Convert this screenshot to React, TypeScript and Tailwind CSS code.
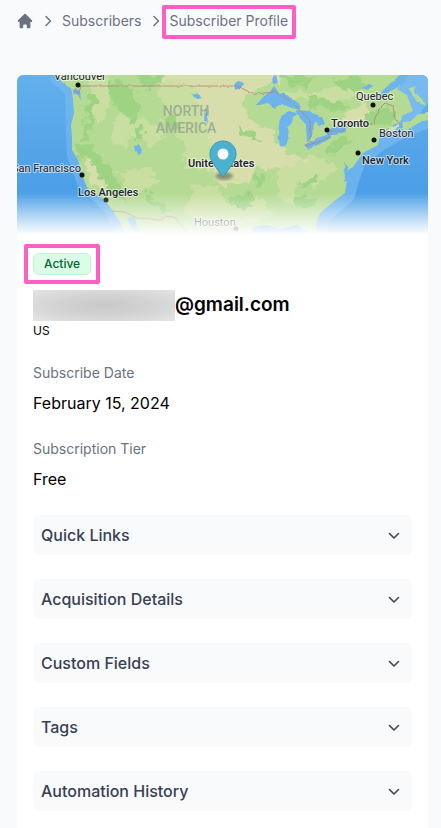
import React from "react";

const sections = [
	"Quick Links",
	"Acquisition Details",
	"Custom Fields",
	"Tags",
	"Automation History",
];

const cities = [
	{ name: "Vancouver", x: 37, y: 5, dot: [61, 10], weight: 400 },
	{ name: "San Francisco", x: -5, y: 97, dot: [65, 100], weight: 400 },
	{ name: "Los Angeles", x: 61, y: 121, dot: [89, 125], weight: 500 },
	{ name: "Quebec", x: 339, y: 25, dot: [356, 30], weight: 400 },
	{ name: "Toronto", x: 314, y: 52, dot: [310, 55], weight: 500 },
	{ name: "Boston", x: 362, y: 62, dot: [357, 65], weight: 400 },
	{ name: "New York", x: 345, y: 89, dot: [341, 78], weight: 500 },
	{ name: "Houston", x: 177, y: 151, dot: [219, 154], weight: 400 },
];

const ChevronRight: React.FC = () => (
	<svg
		className="h-5 w-5 shrink-0"
		viewBox="0 0 20 20"
		fill="none"
		stroke="currentColor"
		strokeWidth="1.5"
		strokeLinecap="round"
		strokeLinejoin="round"
		aria-hidden="true"
	>
		<path d="M8 5.500l4.500 4.500L8 14.500" />
	</svg>
);

const ChevronDown: React.FC = () => (
	<svg
		className="h-5 w-5 shrink-0"
		viewBox="0 0 20 20"
		fill="none"
		stroke="currentColor"
		strokeWidth="1.5"
		strokeLinecap="round"
		strokeLinejoin="round"
		aria-hidden="true"
	>
		<path d="M5.500 8.500L10 13l4.500-4.500" />
	</svg>
);

const LocationMap: React.FC = () => (
	<svg
		className="block h-40 w-full rounded-t-md font-[Roboto,sans-serif]"
		viewBox="0 0 411 160"
		preserveAspectRatio="xMidYMid slice"
		role="img"
		aria-label="Subscriber location"
	>
		<defs>
			<linearGradient id="fade" x1="0" y1="0" x2="0" y2="1">
				<stop offset="0.74" stopColor="#fff" stopOpacity="0" />
				<stop offset="1" stopColor="#fff" />
			</linearGradient>
			<linearGradient id="ocean" x1="0" y1="0" x2="0" y2="1">
				<stop offset="0" stopColor="#64b0ec" />
				<stop offset="0.7" stopColor="#4c9fe6" />
				<stop offset="1" stopColor="#5aa9ea" />
			</linearGradient>
			<filter id="rough" x="-5%" y="-5%" width="110%" height="110%">
				<feTurbulence type="fractalNoise" baseFrequency="0.1" numOctaves="3" seed="4" />
				<feDisplacementMap in="SourceGraphic" scale="16" xChannelSelector="R" yChannelSelector="G" />
			</filter>
			<filter id="shore" x="-5%" y="-5%" width="110%" height="110%">
				<feTurbulence type="fractalNoise" baseFrequency="0.2" numOctaves="2" seed="7" />
				<feDisplacementMap in="SourceGraphic" scale="3" xChannelSelector="R" yChannelSelector="G" />
			</filter>
			<filter id="soft">
				<feGaussianBlur stdDeviation="1.5" />
			</filter>
			<clipPath id="land">
				<path d="M48 -4L55 17 56 25 57 38 54 50 55 62 55 75 61 85 64 95 68 108 73 118 82 121 88 125 95 135 103 147 110 162H236V152L250 150 262 154 280 150 293 158 301 162 299 148 303 138 316 127 328 118 330 105 331 95 336 92 346 78 361 70 363 60 373 52 383 47 386 40 396 36 390 20 380 14 390 2 394 -4Z" />
			</clipPath>
		</defs>
		<rect width="411" height="160" fill="url(#ocean)" />
		{/* shallow water along the coasts */}
		<g fill="none" stroke="#78baf0" strokeLinejoin="round">
			<path strokeWidth="12" d="M36 0L54 17 55 62 56 80 66 108 90 130 108 160" opacity="0.6" />
			<path strokeWidth="16" d="M411 45L386 55 363 68 341 85 334 105 330 120 304 142 302 160" opacity="0.7" />
			<path strokeWidth="36" d="M411 0L390 25 380 46" />
		</g>
		<g clipPath="url(#land)">
			<rect width="411" height="162" fill="#b5da94" />
			<g filter="url(#rough)">
				<path fill="#d7deac" d="M135 -5H270L262 6 250 12 240 12 225 24 200 20 180 10 150 10Z" />
				<path fill="#c8dfa1" d="M75 0L95 0 92 34 82 50 74 30Z" />
				<path fill="#c8dfa1" d="M140 8L185 12 200 60 190 92 170 96 168 70 150 52Z" />
				<path fill="#d7deac" d="M178 6L225 22 232 42 258 62 268 80 300 84 286 96 240 92 232 106 205 112 190 96 198 72 186 50Z" />
				<path fill="#c8dfa1" d="M105 40L130 44 150 62 132 70 118 60 108 78 96 64 92 50Z" />
				<path fill="#c8dfa1" d="M175 110L200 112 212 130 240 124 258 142 210 152 168 142Z" />
				<path fill="#c8dfa1" d="M262 94L296 84 322 92 300 110 280 106 276 130 260 120Z" />
				<path fill="#c8dfa1" d="M100 98L124 94 146 104 130 116 108 112Z" />
				<path fill="#c8dfa1" d="M255 14L300 18 330 8 345 20 316 28 272 26Z" />
				<path fill="#d7deac" d="M326 40L348 30 356 36 340 48 316 52Z" />
				<g fill="#9ed383">
					<path d="M92 10L102 6 116 16 122 34 116 48 104 36 96 26Z" />
					<path d="M72 18L80 22 76 44 70 66 64 62 70 44Z" />
					<path d="M56 68L74 70 90 90 100 104 110 128 100 126 88 106 74 92 62 84Z" />
					<path d="M118 52L128 54 126 66 118 64Z" />
					<path d="M150 44L160 40 162 56 152 54Z" />
					<path d="M126 118L140 122 152 136 146 140 132 128Z" />
					<path d="M116 -2L150 0 144 8 128 12Z" />
					<path d="M264 2L276 0 300 2 292 12 270 8Z" />
					<path d="M318 4L340 0 350 12 334 18 320 12Z" />
					<path d="M290 20L318 24 332 34 314 36 296 32Z" />
					<path d="M344 40L370 30 380 36 376 48 352 52Z" />
					<path d="M310 72L328 62 334 66 322 76 308 80Z" />
					<path d="M280 110L298 98 304 102 288 114Z" />
					<path d="M276 124L292 120 300 128 288 136 278 132Z" />
					<path d="M238 100L246 98 248 110 240 112Z" />
					<path d="M214 122L232 118 238 128 228 134 214 130Z" />
					<path d="M222 52L236 56 240 64 226 62Z" />
				</g>
				<path fill="#d7deac" d="M64 80L72 84 88 106 94 122 82 116 74 104Z" />
			</g>
		</g>
		<g filter="url(#shore)">
			<path fill="#b5da94" d="M36 -2L48 -4 62 10 61 16 50 11Z" />
			<path fill="#b5da94" d="M384 54L387 47 394 46 400 40 411 37V45L401 48 390 56Z" />
			<path fill="#b5da94" d="M392 14L398 11 397 17 405 24 409 31 400 27Z" />
			<path fill="#d7deac" d="M372 52L383 49 378 55 366 62Z" />
			<g fill="#6eb4ec">
				<path d="M58 13L63 16 64 26 61 20 56 18Z" />
				<path d="M238 31L247 21 252 18 257 11 262 18 270 20 280 27 284 35 274 33 265 29 258 34 251 28Z" />
				<path d="M263 42L272 36 282 38 276 42 275 48 271 52 272 62 268 72 263 71 261 57Z" />
				<path d="M279 35L292 36 305 42 308 49 301 51 299 46 296 52 295 62 290 67 289 50 283 43Z" />
				<path d="M287 70L300 63 313 59 314 63 303 69 291 74Z" />
				<path d="M309 56L317 52 329 52 329 57 318 60 310 60Z" />
				<path d="M255 2L259 0 261 8 256 9Z" />
				<path d="M217 10L222 6 227 8 224 13 218 15Z" />
				<path d="M117 71L122 70 125 75 123 79 118 76Z" />
				<path d="M174 18L180 19 185 23 180 24Z" />
				<path d="M188 33L192 35 190 48 187 45Z" />
				<path d="M327 88L331 92 332 103 328 108Z" />
				<path d="M110 142L118 143 121 155 127 160H117Z" />
				<path d="M345 13L352 9 356 11 350 15Z" />
				<path d="M360 26L365 16 374 8 385 -2 394 -2 386 9 374 16Z" />
			</g>
			<path d="M55 16L62 18 64 11H221L226 14 238 19 258 17 274 27 285 37 293 46 294 61 290 71 313 62 313 56 326 56 329 49 356 49 362 34 368 28 376 31 378 44 384 51" fill="none" stroke="#b78278" strokeWidth="0.8" />
			<path d="M95 136L107 137 120 143 145 145 147 141 157 142 166 152 174 160" fill="none" stroke="#b78278" strokeWidth="0.8" />
		</g>
		<g fill="#9fae93" fontSize="14" fontWeight="500" textAnchor="middle">
			<text x="169" y="41">NORTH</text>
			<text x="169" y="58">AMERICA</text>
		</g>
		<g
			stroke="#fff"
			strokeOpacity="0.6"
			strokeWidth="2"
			strokeLinejoin="round"
			paintOrder="stroke"
			fill="#20242b"
			fontSize="11"
		>
			{cities.map((city) => (
				<text key={city.name} x={city.x} y={city.y} fontWeight={city.weight}>
					{city.name}
				</text>
			))}
			<text x="171" y="92" fontWeight="600">
				United States
			</text>
		</g>
		{cities.map((city) => (
			<circle key={city.name} cx={city.dot[0]} cy={city.dot[1]} r="2.500" fill="#111" />
		))}
		<ellipse cx="207" cy="101" rx="9" ry="4" fill="#4b5540" opacity="0.55" filter="url(#soft)" />
		<path
			d="M206 66c-7.500 0-13 5.800-13 13 0 4.500 2.200 8 5 12.200L206 102l8-10.800c2.800-4.200 5-7.700 5-12.200 0-7.200-5.500-13-13-13z"
			fill="#4bb1cf"
			stroke="#389ab8"
			strokeWidth="1"
		/>
		<circle cx="206" cy="79" r="5.500" fill="#fff" />
		<rect width="411" height="160" fill="url(#fade)" />
	</svg>
);

const App: React.FC = () => {
	return (
		<div className="min-h-screen bg-[#f9fafc] px-4 pr-3 font-[Inter,sans-serif]">
			<nav aria-label="Breadcrumb" className="pt-[11px]">
				<ol className="flex items-center gap-1 text-sm text-gray-500">
					<li>
						<a href="#home" aria-label="Home">
							<svg className="h-[18px] w-[18px]" viewBox="0 0 20 20" fill="currentColor" aria-hidden="true">
								<path d="M10.707 2.293a1 1 0 00-1.414 0l-7 7a1 1 0 001.414 1.414L4 10.414V17a1 1 0 001 1h2a1 1 0 001-1v-2a1 1 0 011-1h2a1 1 0 011 1v2a1 1 0 001 1h2a1 1 0 001-1v-6.586l.293.293a1 1 0 001.414-1.414l-7-7z" />
							</svg>
						</a>
					</li>
					<li className="flex items-center gap-1">
						<ChevronRight />
						<a href="#subscribers">Subscribers</a>
					</li>
					<li className="flex items-center gap-1">
						<ChevronRight />
						<span className="relative" aria-current="page">
							Subscriber Profile
							<span className="absolute -inset-x-2 -top-1.5 -bottom-2 rounded-xs border-4 border-[#ff5fc4]" />
						</span>
					</li>
				</ol>
			</nav>

			<main className="mt-11 ml-px mr-px min-h-[753px] rounded-t-md bg-white">
				<LocationMap />
				<div className="px-4 pt-[18px] pb-4">
					<span className="relative flex w-fit rounded-md border border-green-200 bg-green-100 px-[10px] py-0.5 text-xs font-medium text-green-800">
						Active
						<span className="absolute -inset-[10px] rounded-xs border-4 border-[#ff5fc4]" />
					</span>
					<div className="mt-[15px] flex items-center">
						<div className="h-[31px] w-[142px] bg-[radial-gradient(ellipse_at_center,#c9c9c9,#d2d2d2_45%,#e4e4e4)]" />
						<h1 className="text-[19px] font-semibold text-black">@gmail.com</h1>
					</div>
					<p className="mt-0.5 text-xs text-black">US</p>

					<dl className="mt-6">
						<dt className="text-sm text-gray-500">Subscribe Date</dt>
						<dd className="mt-2 text-base text-black">February 15, 2024</dd>
						<dt className="mt-6 text-sm text-gray-500">Subscription Tier</dt>
						<dd className="mt-2 text-base text-black">Free</dd>
					</dl>

					<div className="mt-6 space-y-6">
						{sections.map((section) => (
							<button
								key={section}
								type="button"
								aria-expanded="false"
								className="flex w-full items-center justify-between rounded-md bg-[#f9fafc] p-2 text-base font-medium text-gray-700"
							>
								{section}
								<ChevronDown />
							</button>
						))}
					</div>
				</div>
			</main>
		</div>
	);
};

export default App;
